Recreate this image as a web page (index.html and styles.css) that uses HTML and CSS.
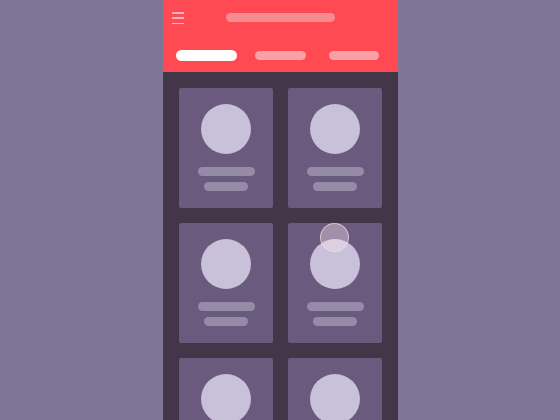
FILE: index.html
```html
<!DOCTYPE html>
<html>
<head>
<meta charset="utf-8">
<link rel="stylesheet" href="styles.css">
</head>
<body>
<div class="stage">
  <div class="phone">
    <header class="header">
      <div class="topbar">
        <div class="menu"><span></span><span></span><span></span></div>
        <div class="title"></div>
      </div>
      <nav class="tabs">
        <div class="tab tab-active"></div>
        <div class="tab tab-2"></div>
        <div class="tab tab-3"></div>
      </nav>
    </header>
    <main class="content">
      <div class="grid">
        <div class="card"><div class="avatar"></div><div class="line line-long"></div><div class="line line-short"></div></div>
        <div class="card"><div class="avatar"></div><div class="line line-long"></div><div class="line line-short"></div></div>
        <div class="card"><div class="avatar"></div><div class="line line-long"></div><div class="line line-short"></div></div>
        <div class="card card-touched"><div class="avatar"></div><div class="line line-long"></div><div class="line line-short"></div><div class="touch"></div></div>
        <div class="card"><div class="avatar"></div><div class="line line-long"></div><div class="line line-short"></div></div>
        <div class="card"><div class="avatar"></div><div class="line line-long"></div><div class="line line-short"></div></div>
      </div>
    </main>
  </div>
</div>
</body>
</html>
```

FILE: styles.css
```css
html, body {
  margin: 0;
  padding: 0;
  width: 560px;
  height: 420px;
  overflow: hidden;
  background: #7f7597;
  font-family: "Liberation Sans", Arial, sans-serif;
}
.stage {
  display: flex;
  justify-content: center;
  height: 420px;
  padding-left: 1px;
}
.phone {
  width: 235px;
  height: 420px;
  background: #433649;
  display: flex;
  flex-direction: column;
  overflow: hidden;
}
.header {
  background: #ff4a53;
  height: 72px;
  flex: none;
  box-sizing: border-box;
  padding-top: 12px;
}
.topbar {
  position: relative;
  height: 12px;
  display: flex;
  justify-content: center;
}
.menu {
  position: absolute;
  left: 9px;
  top: 0;
  width: 12px;
  height: 12px;
  display: flex;
  flex-direction: column;
  justify-content: space-between;
}
.menu span {
  display: block;
  height: 1.5px;
  background: #fbb6b9;
}
.title {
  margin-top: 1px;
  width: 109px;
  height: 9px;
  border-radius: 5px;
  background: #f68b90;
}
.tabs {
  display: flex;
  align-items: center;
  margin-top: 26px;
  padding-left: 13px;
  height: 11px;
}
.tab {
  height: 9px;
  border-radius: 5px;
  background: #f9a0a4;
}
.tab-active {
  width: 61px;
  height: 11px;
  border-radius: 6px;
  background: #ffffff;
}
.tab-2 {
  width: 51px;
  margin-left: 18px;
}
.tab-3 {
  width: 50px;
  margin-left: 23px;
}
.content {
  flex: 1;
  padding: 16px 16px 0;
  overflow: hidden;
}
.grid {
  display: grid;
  grid-template-columns: 94px 94px;
  gap: 15px;
}
.card {
  position: relative;
  height: 120px;
  border-radius: 2px;
  background: #6a5a7e;
  display: flex;
  flex-direction: column;
  align-items: center;
}
.avatar {
  width: 50px;
  height: 50px;
  margin-top: 16px;
  border-radius: 50%;
  background: #c9c0d9;
}
.line {
  height: 9px;
  border-radius: 5px;
  background: #958ba7;
}
.line-long {
  width: 57px;
  margin-top: 13px;
}
.line-short {
  width: 44px;
  margin-top: 6px;
}
.touch {
  position: absolute;
  left: 32px;
  top: 0;
  width: 27px;
  height: 27px;
  border-radius: 50%;
  background: rgba(255, 232, 238, 0.38);
  border: 1px solid rgba(230, 220, 235, 0.7);
}
```
